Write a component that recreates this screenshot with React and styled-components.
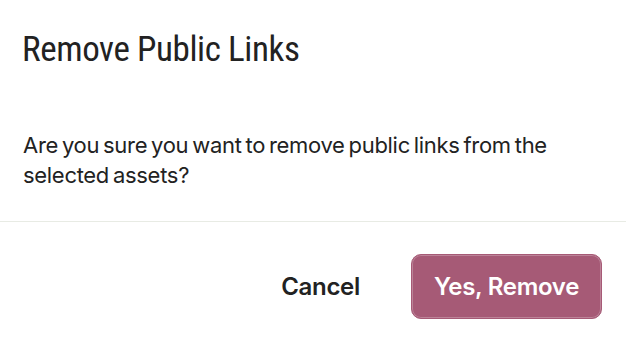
import React from "react";
import styled, { createGlobalStyle } from "styled-components";

const GlobalStyle = createGlobalStyle`
  html, body {
    margin: 0;
    padding: 0;
    background: #ffffff;
  }
  body {
    font-family: Inter, "Liberation Sans", sans-serif;
    color: #222222;
  }
`;

const Dialog = styled.div`
  width: 626px;
  height: 337px;
  background: #ffffff;
  display: flex;
  flex-direction: column;
  box-sizing: border-box;
`;

const Title = styled.h2`
  margin: 0;
  padding: 30px 22px 0;
  font-family: Roboto, sans-serif;
  font-stretch: 80%;
  font-size: 35px;
  line-height: 40px;
  font-weight: 400;
  letter-spacing: -0.4px;
  color: #222222;
`;

const Message = styled.p`
  margin: 0;
  padding: 60px 22px 31px 23px;
  font-size: 22px;
  line-height: 30px;
  font-weight: 400;
  letter-spacing: -0.3px;
  word-spacing: -2px;
  color: #222222;
  max-width: 560px;
`;

const Footer = styled.div`
  border-top: 1px solid #e8ebe4;
  display: flex;
  justify-content: flex-end;
  align-items: center;
  gap: 51px;
  padding: 32px 24px 0;
`;

const TextButton = styled.button`
  border: none;
  background: none;
  padding: 0;
  font-family: inherit;
  font-size: 24px;
  font-weight: 600;
  letter-spacing: -0.3px;
  color: #222222;
  cursor: pointer;
`;

const PrimaryButton = styled.button`
  width: 191px;
  height: 65px;
  border: 1px solid #a65a76;
  border-radius: 10px;
  background: #a65a76;
  box-shadow: inset 0 0 0 1px rgba(255, 255, 255, 0.25);
  font-family: inherit;
  font-size: 24px;
  font-weight: 600;
  letter-spacing: -0.3px;
  color: #ffffff;
  cursor: pointer;
`;

const App = () => {
  return (
    <>
      <GlobalStyle />
      <Dialog>
        <Title>Remove Public Links</Title>
        <Message>
          Are you sure you want to remove public links from the selected assets?
        </Message>
        <Footer>
          <TextButton>Cancel</TextButton>
          <PrimaryButton>Yes, Remove</PrimaryButton>
        </Footer>
      </Dialog>
    </>
  );
};

export default App;
